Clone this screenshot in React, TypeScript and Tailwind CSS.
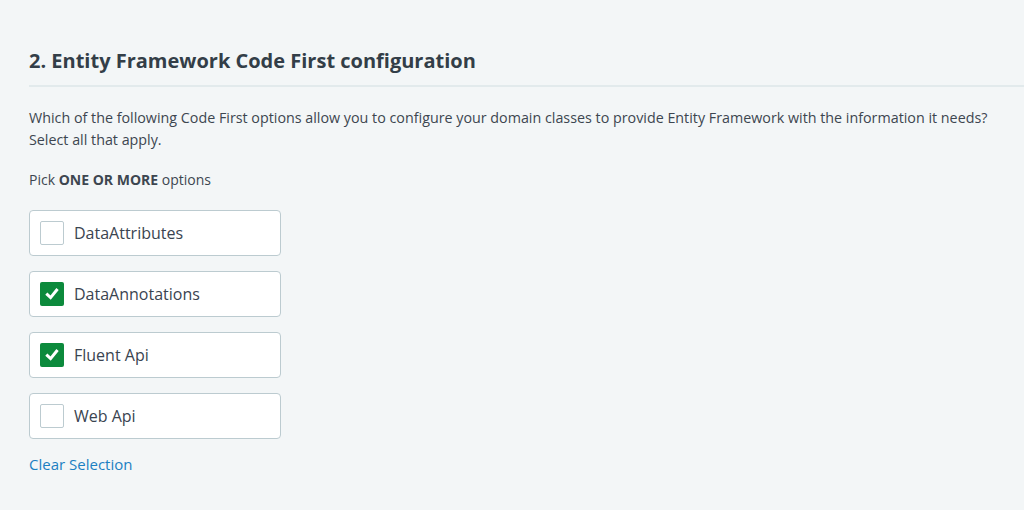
import { useState } from "react";

const OPTIONS = ["DataAttributes", "DataAnnotations", "Fluent Api", "Web Api"];

export default function App() {
    const [selected, setSelected] = useState<string[]>(["DataAnnotations", "Fluent Api"]);

    const toggle = (opt: string) =>
        setSelected((s) => (s.includes(opt) ? s.filter((o) => o !== opt) : [...s, opt]));

    return (
        <div className="min-h-[510px] w-full bg-[#f3f6f7] pl-[29px] pt-[47px] text-[#333d47] [font-family:'Open_Sans',sans-serif]">
            <h2 className="text-[20px] font-bold leading-[28px] text-[#333e48]">
                2. Entity Framework Code First configuration
            </h2>
            <div className="mt-[10px] h-[2px] w-full bg-[#e2eaec]" />

            <p className="mt-[20px] pr-[20px] text-[14.3px] leading-[22px] text-[#3d4650]">
                Which of the following Code First options allow you to configure your domain classes to provide Entity Framework with the information it needs? Select all that apply.
            </p>

            <p className="mt-[19px] text-[14px] leading-[20px] text-[#3d4650]">
                Pick <span className="font-bold">ONE OR MORE</span> options
            </p>

            <div className="mt-[20px] flex flex-col gap-[15px]">
                {OPTIONS.map((opt) => {
                    const on = selected.includes(opt);
                    return (
                        <button
                            key={opt}
                            onClick={() => toggle(opt)}
                            className="flex h-[46px] w-[252px] items-center gap-[10px] rounded-[4px] border border-[#bccbd0] bg-white px-[10px] text-left"
                        >
                            {on ? (
                                <span className="flex h-[24px] w-[24px] items-center justify-center rounded-[2px] bg-[#0c8a3c]">
                                    <svg width="14" height="14" viewBox="0 0 14 14" fill="none">
                                        <path d="M2.4 7.6 L5.6 10.6 L11.6 3.2" stroke="white" strokeWidth="3" strokeLinecap="square" strokeLinejoin="miter" />
                                    </svg>
                                </span>
                            ) : (
                                <span className="h-[24px] w-[24px] rounded-[2px] border border-[#bccbd0] bg-white" />
                            )}
                            <span className="text-[16px] text-[#3a4450]">{opt}</span>
                        </button>
                    );
                })}
            </div>

            <button
                onClick={() => setSelected([])}
                className="mt-[14px] text-[15px] leading-[22px] text-[#1b80c2]"
            >
                Clear Selection
            </button>
        </div>
    );
}
